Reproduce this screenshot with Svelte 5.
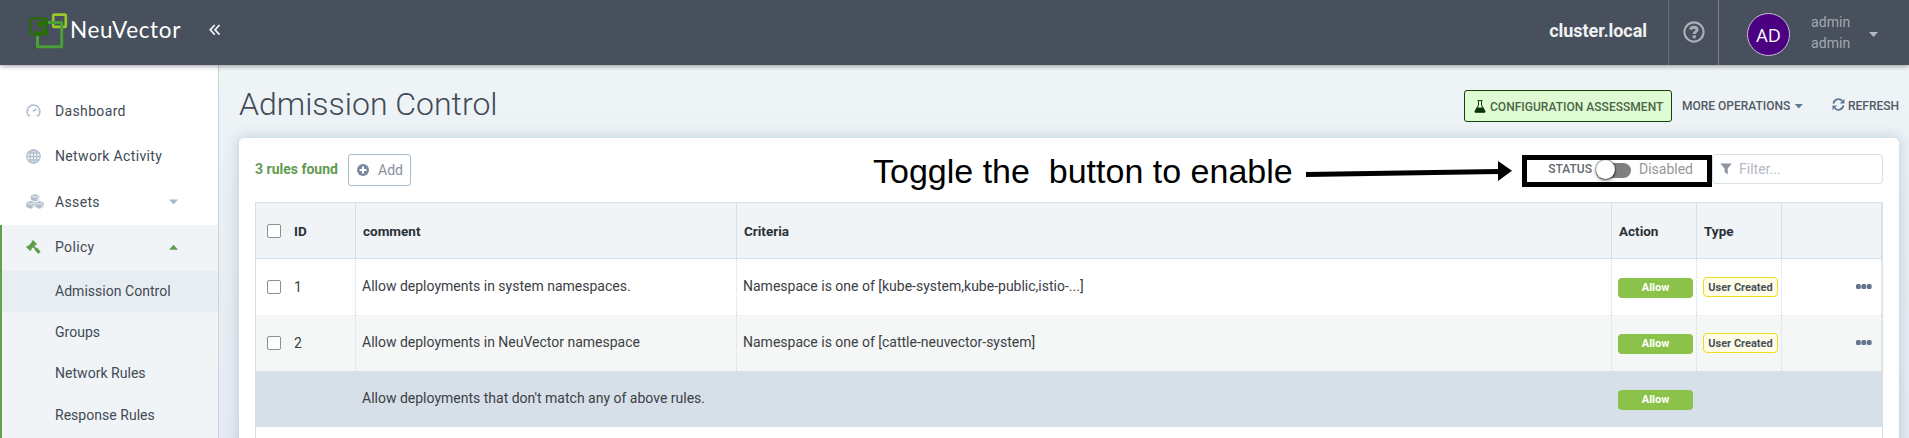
<script>
  const menu = [
    { label: 'Dashboard', icon: 'dash' },
    { label: 'Network Activity', icon: 'globe' },
    { label: 'Assets', icon: 'cubes', caret: true }
  ];
  const sub = ['Admission Control', 'Groups', 'Network Rules', 'Response Rules'];
  const rules = [
    { id: 1, comment: 'Allow deployments in system namespaces.', criteria: 'Namespace is one of [kube-system,kube-public,istio-...]' },
    { id: 2, comment: 'Allow deployments in NeuVector namespace', criteria: 'Namespace is one of [cattle-neuvector-system]' }
  ];
</script>

<div class="app">
  <header>
    <div class="brand">
      <svg class="logo" width="40" height="38" viewBox="0 0 40 38" fill="none">
        <rect x="25.200" y="2.600" width="12.600" height="12.300" rx="1" stroke="#97ca28" stroke-width="2.600" />
        <path d="M19 10.500h14.700v24.200h-24.200v-11.500" stroke="#4a9f38" stroke-width="3" stroke-linejoin="round" />
        <rect x="2.500" y="6.500" width="16.300" height="15.700" rx="1" stroke="#2b6a0c" stroke-width="2.400" />
        <path d="M9.500 10l2-1h4l3-1.300v3.300l-1.500 2-4.500 3.500-3.500-2.500z" fill="#2b7004" />
        <path d="M6.500 17.500q3 3.500 6 2l5.500-4v6.500h-11.500z" fill="#2b7004" />
      </svg>
      <span class="name">NeuVector</span>
    </div>
    <svg class="fold" width="12" height="12" viewBox="0 0 12 12" fill="none" stroke="#f2f4f6" stroke-width="1.700"><path d="M5.700 1L1.200 5.800l4.500 4.800M10.500 1L6 5.800l4.500 4.800" /></svg>
    <div class="grow"></div>
    <div class="cluster">cluster.local</div>
    <div class="help">
      <svg width="22" height="22" viewBox="0 0 22 22" fill="none" stroke="#a9afb6"><circle cx="11" cy="11" r="9.600" stroke-width="2.100" /><path d="M7.500 8.600c.5-1.800 1.900-2.400 3.400-2.400 1.900 0 3.200 1 3.200 2.500 0 2.200-2.900 2.100-2.900 4.400" stroke-width="2.900" /><path d="M11.200 14.300v3" stroke-width="3" /></svg>
    </div>
    <div class="user">
      <div class="avatar">AD</div>
      <div class="who"><span>admin</span><span>admin</span></div>
      <i class="caret pale"></i>
    </div>
  </header>

  <div class="body">
    <nav>
      {#each menu as m}
        <div class="item">
          <span class="ico">
            {#if m.icon === 'dash'}
              <svg width="15" height="15" viewBox="0 0 15 15" fill="none" stroke="#b1bfcd"><path d="M3.300 13.500a6.500 6.500 0 1 1 8.400 0" stroke-width="1.400" /><path d="M6.800 8.300l3.800-2.300" stroke-width="1.600" /><path d="M2 7.800h1.300M3.600 4l.7.700M7.500 2v1.200M11.700 7.800h1.300M2.500 12.500l2-.4M12.500 12.500l-2-.4" /></svg>
            {:else if m.icon === 'globe'}
              <svg width="15" height="15" viewBox="0 0 15 15" fill="none" stroke="#b1bfcd" stroke-width="1.300"><circle cx="7.500" cy="7.500" r="6.700" /><ellipse cx="7.500" cy="7.500" rx="3.400" ry="6.700" /><path d="M7.500.8v13.400M.8 7.500h13.400M1.700 4h11.600M1.700 11h11.600" /></svg>
            {:else}
              <svg width="18" height="15" viewBox="0 0 18 15"><g fill="#b1bfcd" stroke="#fff" stroke-width=".3"><path d="M9 0l4.200 1.600v4.500l-4.200 1.700-4.200-1.700V1.600z" /><path d="M4.500 6.800l4.300 1.700v4.600l-4.300 1.800-4.400-1.800V8.500z" /><path d="M13.500 6.800l4.400 1.700v4.600l-4.400 1.800-4.300-1.800V8.500z" /></g><path d="M6.300 2.300l2.700 1 2.700-1M10.700 6l1.600-.7V3.500M1.800 9.300l2.700 1 2.700-1M6.200 13.200l1.600-.7v-1.700M10.800 9.300l2.700 1 2.700-1M15.200 13.200l1.600-.7v-1.700" fill="none" stroke="#fff" stroke-width=".9" /></svg>
            {/if}
          </span>
          <span>{m.label}</span>
          {#if m.caret}<i class="caret side"></i>{/if}
        </div>
      {/each}
      <div class="open">
        <div class="item policy">
          <span class="ico">
            <svg width="15" height="15" viewBox="0 0 15 15" fill="#5f9e4d"><path d="M0 6.900L1.400 5.800 2 6.100 5.800 2.300 5.400 1.700 7 .1 11 4 9.600 5.500 9 5.200 8.300 6 10.300 7.900 10.900 7.600 14.600 11.500 12.400 13.900 8.600 10 8.900 9.200 7 7.300 5.300 8.900 5.700 9.600 4.300 11z" /></svg>
          </span>
          <span>Policy</span>
          <i class="caret side up"></i>
        </div>
        {#each sub as s, i}
          <div class="sub" class:active={i === 0}>{s}</div>
        {/each}
      </div>
    </nav>

    <main>
      <div class="titlebar">
        <h1>Admission Control</h1>
        <button class="assess">
          <svg width="12" height="13" viewBox="0 0 12 13"><path d="M3.500.6h5M4.500 1v4L1 11.300q-.4 1 .7 1h8.600q1.100 0 .7-1L7.500 5V1" fill="none" stroke="#123c0c" stroke-width="1" /><path d="M3 7.500h6l2.500 4.700H.5z" fill="#0c330a" /></svg>
          <span>CONFIGURATION ASSESSMENT</span>
        </button>
        <div class="more">MORE OPERATIONS<i class="caret blue"></i></div>
        <div class="refresh">
          <svg width="13" height="13" viewBox="0 0 13 13"><path d="M1.500 5.500A5 5 0 0 1 10.300 3M11.500 7.500A5 5 0 0 1 2.700 10" fill="none" stroke="#5f7995" stroke-width="1.800" /><path d="M12.500.7v4.700H7.800zM.5 12.300V7.600h4.700z" fill="#5f7995" /></svg>
          <span>REFRESH</span>
        </div>
      </div>

      <section class="card">
        <div class="tools">
          <span class="found">3 rules found</span>
          <button class="add">
            <svg width="12" height="12" viewBox="0 0 12 12"><circle cx="6" cy="6" r="6" fill="#7788a0" /><path d="M6 2.600v6.800M2.600 6h6.800" stroke="#fff" stroke-width="2" /></svg>
            <span>Add</span>
          </button>
          <div class="grow"></div>
          <span class="status">STATUS</span>
          <span class="switch"><i></i></span>
          <span class="disabled">Disabled</span>
          <div class="filter">
            <svg width="12" height="12" viewBox="0 0 12 12"><path d="M.2.500h11.600L7.700 5.600V11.500L4.600 9V5.600z" fill="#8d95a1" /></svg>
            <span>Filter...</span>
          </div>
          <div class="frame"></div>
          <div class="note">Toggle the&nbsp; button to enable</div>
          <svg class="arrow" width="210" height="24" viewBox="0 0 210 24"><path d="M1 15.500L194 12.500" stroke="#000" stroke-width="5" /><path d="M193 2v20l14-10.200z" /></svg>
        </div>

        <div class="grid">
          <div class="row head">
            <div class="cell id"><i class="box"></i><span>ID</span></div>
            <div class="cell">comment</div>
            <div class="cell">Criteria</div>
            <div class="cell">Action</div>
            <div class="cell">Type</div>
            <div class="cell"></div>
          </div>
          {#each rules as r}
            <div class="row" class:even={r.id === 2}>
              <div class="cell id"><i class="box"></i><span>{r.id}</span></div>
              <div class="cell">{r.comment}</div>
              <div class="cell">{r.criteria}</div>
              <div class="cell tag"><span class="allow">Allow</span></div>
              <div class="cell tag"><span class="type">User Created</span></div>
              <div class="cell dots"><svg width="16" height="5" viewBox="0 0 16 5" fill="#64748b"><rect width="4.800" height="5" rx="1.600" /><rect x="5.400" width="4.800" height="5" rx="1.600" /><rect x="10.800" width="4.800" height="5" rx="1.600" /></svg></div>
            </div>
          {/each}
          <div class="row default">
            <div class="cell"></div>
            <div class="cell">Allow deployments that don't match any of above rules.</div>
            <div class="cell"></div>
            <div class="cell tag"><span class="allow">Allow</span></div>
            <div class="cell"></div>
            <div class="cell"></div>
          </div>
        </div>
      </section>
    </main>
  </div>
</div>

<style>
  :global(body) { overflow: hidden; }
  .app, .app * { box-sizing: border-box; }
  .app { width: 1909px; height: 438px; overflow: hidden; display: flex; flex-direction: column; font-family: Roboto, sans-serif; font-size: 14px; color: #3e4750; }
  button { font-family: inherit; margin: 0; }
  .grow { flex: 1; }
  header { height: 65px; flex: none; background: #47505c; display: flex; position: relative; z-index: 2; box-shadow: 0 1px 5px rgba(0, 0, 0, .4); }
  .brand { display: flex; width: 209px; padding-left: 28px; }
  .logo { margin-top: 12px; flex: none; }
  .name { font-family: Lato, sans-serif; font-size: 22.500px; line-height: 26px; color: #fff; margin: 17px 0 0 2px; letter-spacing: .65px; }
  .fold { margin-top: 24px; }
  .cluster { font-size: 18px; font-weight: 700; color: #f1f2f3; line-height: 62px; padding-right: 21px; letter-spacing: -.05px; }
  .help { width: 51px; border-left: 1px solid #656d77; border-right: 1px solid #7b828b; padding: 21px 0 0 14px; }
  .user { width: 190px; display: flex; padding-left: 28px; }
  .avatar { width: 43px; height: 43px; border-radius: 50%; background: #4b0082; border: 1px solid #c9bfd4; color: #fff; font-family: "Open Sans", sans-serif; font-size: 18px; line-height: 42px; text-align: center; margin-top: 13px; flex: none; }
  .who { display: flex; flex-direction: column; margin: 12px 0 0 21px; line-height: 21px; color: #a3a9b0; width: 58px; letter-spacing: .1px; }
  .caret { display: block; flex: none; width: 9px; height: 5px; background: #aab8c7; clip-path: polygon(0 0, 100% 0, 50% 100%); }
  .caret.pale { background: #b5b9be; margin-top: 32px; }
  .body { flex: 1; display: flex; min-height: 0; }
  nav { width: 219px; background: #fff; border-right: 1px solid #ccd2d7; padding-top: 23px; flex: none; letter-spacing: .35px; color: #414a55; }
  .item { height: 45.600px; display: flex; align-items: center; padding-left: 26px; }
  .ico { width: 29px; display: flex; }
  .item .side { margin-left: auto; margin-right: 40px; }
  .open { background: #f0f4f7; border-left: 2px solid #62a14f; height: 240px; }
  .policy { height: 46px; padding: 0 0 1px 24px; }
  .caret.up { background: #5f9e4d; clip-path: polygon(0 100%, 100% 100%, 50% 0); }
  .sub { height: 41.300px; line-height: 41px; padding-left: 53px; letter-spacing: .03px; }
  .sub.active { background: #e8edf1; }
  main { flex: 1; background: linear-gradient(#eff4f7, #e9eff3 40%, #e5ebf3); padding: 0 10px 0 20px; min-width: 0; }
  .titlebar { height: 73px; display: flex; align-items: flex-start; color: #525b65; font-size: 12px; font-weight: 500; }
  h1 { font-size: 32px; font-weight: 300; margin: 19px auto 0 0; line-height: 41px; color: #414a55; }
  .assess { width: 208px; height: 32px; margin-top: 25px; background: #dffbd3; border: 1px solid #17400f; border-radius: 3px; display: flex; align-items: center; padding: 1px 0 0 9px; gap: 4px; color: #4c6547; font-size: 12px; font-weight: 500; white-space: nowrap; letter-spacing: .03px; }
  .more { margin: 34px 0 0 10px; line-height: 15px; display: flex; align-items: center; width: 150px; white-space: nowrap; }
  .blue { background: #5f7995; margin: -1px 0 0 4px; }
  .refresh { margin-top: 34px; line-height: 15px; display: flex; gap: 3px; width: 67px; }
  .refresh svg { margin-top: -1px; }
  .card { height: 400px; background: #fff; border-radius: 5px; box-shadow: 0 0 13px rgba(100, 135, 170, .36); padding: 16px 16px 0; }
  .tools { height: 48px; display: flex; position: relative; align-items: flex-start; }
  .found { font-weight: 700; color: #629b51; line-height: 31px; width: 93px; white-space: nowrap; }
  .add { width: 63px; height: 32px; border: 1px solid #a8bccb; border-radius: 3px; background: #fff; padding: 0 0 0 8px; display: flex; align-items: center; gap: 9px; font-size: 14px; color: #8590a1; }
  .status { font-size: 12px; font-weight: 500; line-height: 31px; color: #626970; }
  .switch { width: 34px; height: 15px; border-radius: 8px; background: #808080; margin: 9px 8px 0 5px; }
  .switch i { display: block; width: 19px; height: 19px; border-radius: 50%; background: #fff; box-shadow: 0 0 1px 1px rgba(0, 0, 0, .38), 0 2px 3px rgba(0, 0, 0, .45); margin: -3px 0 0 -1px; }
  .disabled { color: #979797; line-height: 31px; width: 73px; }
  .filter { width: 171px; height: 30px; border: 1px solid #d5e0e9; border-radius: 4px; display: flex; align-items: center; gap: 7px; padding-left: 7px; color: #b3b9c5; }
  .frame { position: absolute; left: 1267px; top: 1px; width: 190px; height: 32px; border: 5px solid #000; }
  .note { position: absolute; left: 618px; top: 0; font: 34px/34px "Liberation Sans", sans-serif; color: #000; white-space: nowrap; }
  .arrow { position: absolute; left: 1050px; top: 5px; }
  .grid { border: 1px solid #d5e0e9; border-bottom: 0; height: 336px; }
  .row { display: grid; grid-template-columns: 100px 381px 875px 85px 85px 1fr; height: 56px; }
  .cell { border-right: 1px dotted #d3dce4; line-height: 55px; padding-left: 6px; white-space: nowrap; color: #3b4045; }
  .head { background: #f0f4f7; border-bottom: 1px solid #d5e0e9; }
  .head .cell { border-right: 1px solid #d5e0e9; font-weight: 700; font-size: 13.500px; line-height: 56px; padding-left: 7px; color: #2b3036; }
  .row .id { display: flex; align-items: center; padding-left: 11px; gap: 13px; }
  .box { width: 14px; height: 14px; border: 1px solid #87918f; border-radius: 2px; background: #fff; }
  .even { background: #f5f7f6; }
  .default { background: #d7e0e8; }
  .default .cell { border-color: transparent; }
  .tag { display: flex; align-items: center; }
  .allow, .type { width: 75px; height: 20px; border-radius: 4px; text-align: center; font-size: 11px; font-weight: 700; line-height: 19px; background: #8bc34a; color: #fff; margin-top: 2px; }
  .type { background: #fffde7; border: 1px solid #e9df1a; color: #47515c; line-height: 19px; margin-top: 0; }
  .dots { display: flex; align-items: center; justify-content: flex-end; padding: 0 9px 2px 0; }
</style>
